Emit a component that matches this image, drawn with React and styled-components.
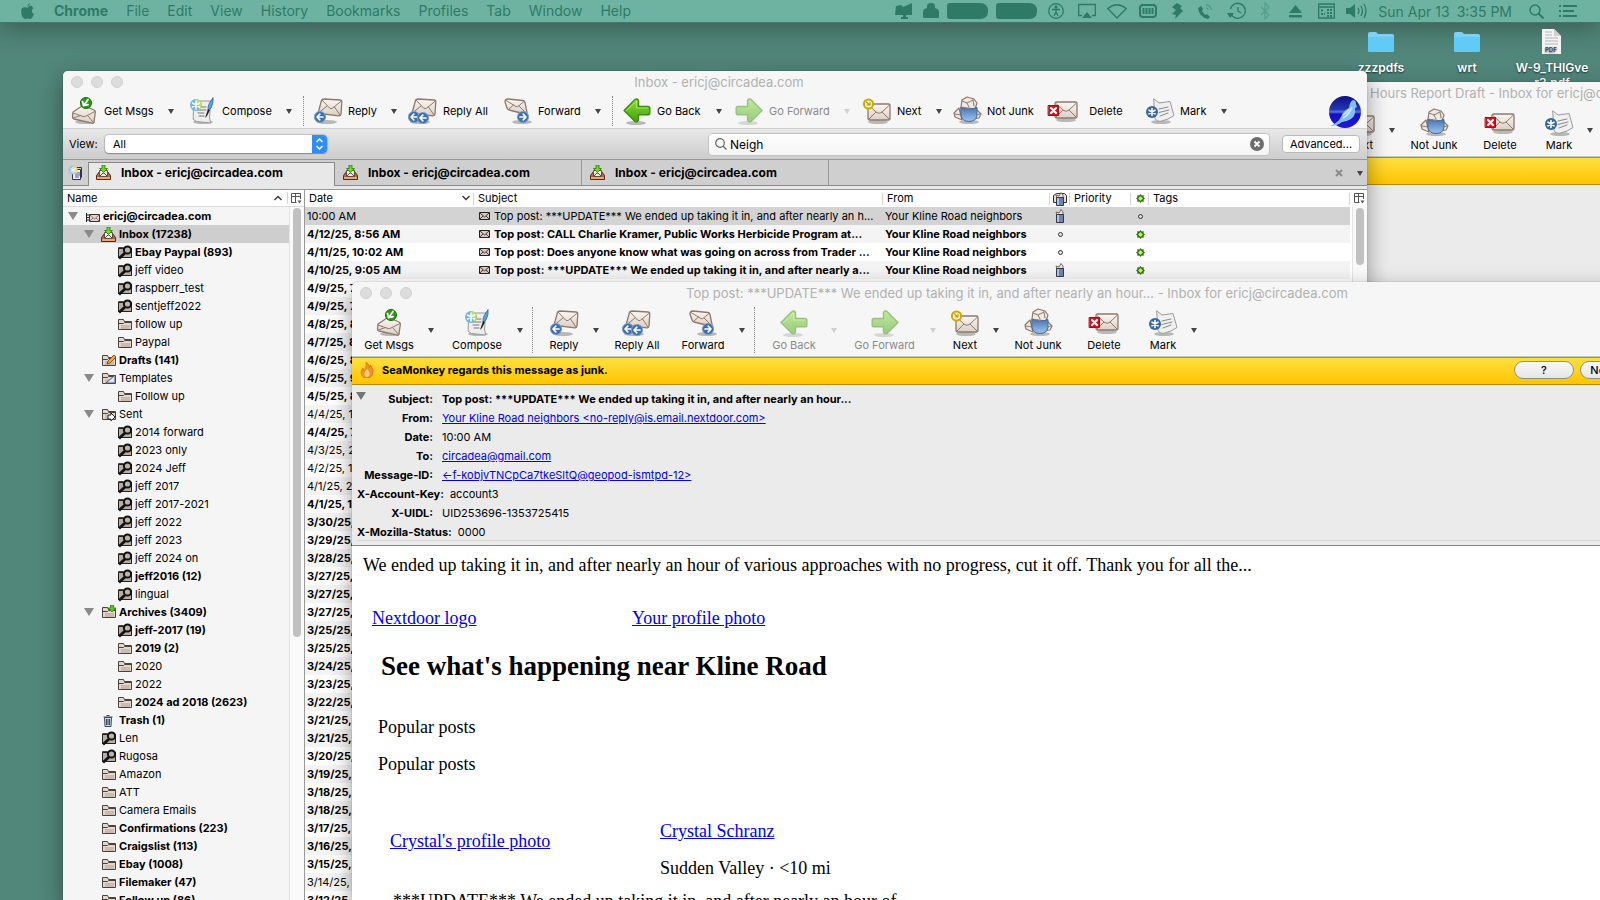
import React from "react";
import styled, { createGlobalStyle, css } from "styled-components";

const GlobalStyle = createGlobalStyle`
  * {
    box-sizing: border-box;
  }
  html,
  body {
    margin: 0;
  }
  body {
    font-family: Inter, "Liberation Sans", sans-serif;
    font-size: 11px;
    color: #000;
  }
  button,
  input,
  select {
    font: inherit;
    color: inherit;
  }
  svg {
    display: block;
    flex: none;
  }
`;

/* ---------- desktop ---------- */

const Desktop = styled.div`
  position: relative;
  height: 100vh;
  overflow: hidden;
  background: #51867a;
`;
const MenuBar = styled.nav`
  display: flex;
  align-items: center;
  justify-content: space-between;
  height: 23px;
  padding: 0 22px 0 21px;
  background: #6eb3a1;
  border-bottom: 1px solid #45756a;
  box-shadow: 0 4px 24px rgba(30, 40, 35, 0.5);
  color: #2f7a66;
  font-size: 14px;
`;
const MenuGroup = styled.div`
  display: flex;
  align-items: center;
  gap: ${(p) => p.$gap}px;
`;
const MenuItem = styled.button`
  border: 0;
  padding: 0;
  background: none;
  white-space: nowrap;
  line-height: 20px;
  font-weight: ${(p) => (p.$bold ? 700 : 400)};
`;
const Clock = styled.span`
  display: flex;
  gap: 7px;
  white-space: nowrap;
`;
const DesktopItem = styled.div`
  position: absolute;
  top: 28px;
  right: ${(p) => p.$right}px;
  width: 80px;
  display: flex;
  flex-direction: column;
  align-items: center;
  gap: 4px;
  color: #fff;
  font-size: 12px;
  font-weight: 600;
  line-height: 15px;
  text-align: center;
  text-shadow: 0 1px 2px rgba(0, 0, 0, 0.7);
`;

/* ---------- windows ---------- */

const Window = styled.section`
  position: absolute;
  top: ${(p) => p.$top}px;
  left: ${(p) => p.$left}px;
  right: ${(p) => p.$right}px;
  bottom: 0;
  display: flex;
  flex-direction: column;
  overflow: hidden;
  background: ${(p) => p.$bg || "#f6f6f6"};
  border-radius: 5px 5px 0 0;
  box-shadow: 0 0 1px rgba(0, 0, 0, 0.5), 0 8px 22px rgba(0, 0, 0, 0.4);
`;
const TitleBar = styled.header`
  display: grid;
  grid-template-columns: 60px 1fr 60px;
  align-items: center;
  flex: none;
  height: 22px;
  padding-left: 8px;
  background: #f6f6f6;
`;
const Lights = styled.div`
  display: flex;
  gap: 8px;
`;
const Light = styled.span`
  width: 12px;
  height: 12px;
  border-radius: 50%;
  background: #dcdcdc;
  border: 1px solid #d0d0d0;
`;
const Title = styled.div`
  text-align: ${(p) => (p.$indent ? "left" : "center")};
  padding-left: ${(p) => p.$indent || 0}px;
  font-size: 13px;
  line-height: 16px;
  color: #b1b1b1;
  white-space: nowrap;
`;

const Toolbar = styled.div`
  display: flex;
  flex: none;
  background: #f6f6f6;
  ${(p) =>
    p.$stacked
      ? css`
          height: 53px;
          padding: 3px 0 3px 4px;
          border-bottom: 1px solid #c9c9c9;
        `
      : css`
          height: 36px;
          padding: 3px 6px 2px 5px;
          border-bottom: 1px solid #cfcfcf;
        `}
`;
const ToolCell = styled.div`
  display: flex;
  align-items: center;
  flex: none;
  width: ${(p) => p.$w}px;
`;
const ToolButton = styled.button`
  display: flex;
  flex-direction: ${(p) => (p.$stacked ? "column" : "row")};
  align-items: center;
  gap: ${(p) => (p.$stacked ? 0 : 4)}px;
  flex: none;
  width: ${(p) => p.$w}px;
  padding: 0;
  border: 0;
  background: none;
  white-space: nowrap;
  line-height: 14px;
  color: ${(p) => (p.disabled ? "#8b8b8b" : "#000")};
  svg {
    opacity: ${(p) => (p.disabled ? 0.5 : 1)};
  }
`;
const ToolLabel = styled.span`
  min-width: ${(p) => p.$min || 0}px;
  text-align: center;
`;
const Caret = styled.span`
  border: 3px solid transparent;
  border-top: 5px solid ${(p) => (p.$dim ? "#cfcfcf" : "#444")};
  border-bottom: 0;
  margin-left: ${(p) => (p.$stacked ? 6 : 0)}px;
`;
const Separator = styled.span`
  align-self: stretch;
  margin: 0 8px 0 auto;
  border-left: 1px dotted #8a8a8a;
`;
const Spacer = styled.span`
  flex: 1;
`;

/* ---------- search row and tabs ---------- */

const SearchBar = styled.div`
  display: flex;
  align-items: center;
  flex: none;
  height: 31px;
  padding: 0 7px 0 6px;
  background: linear-gradient(#e8e8e8, #cdcdcd);
  border-bottom: 1px solid #999;
`;
const ViewLabel = styled.label`
  width: 36px;
`;
const SelectWrap = styled.div`
  position: relative;
  flex: 0 0 222px;
  height: 18px;
  svg {
    position: absolute;
    top: 0;
    right: 0;
    pointer-events: none;
  }
`;
const ViewSelect = styled.select`
  appearance: none;
  width: 100%;
  height: 18px;
  padding: 0 20px 0 8px;
  border: 0;
  border-radius: 4px;
  background: #fff;
  box-shadow: 0 0 1px 1px rgba(0, 0, 0, 0.15), 0 1px 1px rgba(0, 0, 0, 0.25);
`;
const SearchBox = styled.label`
  display: flex;
  align-items: center;
  gap: 3px;
  flex: 0 1 562px;
  height: 23px;
  margin: 0 12px 0 auto;
  padding: 0 5px 0 6px;
  border: 1px solid #c4c4c4;
  border-radius: 4px;
  background: linear-gradient(#fff, #f4f4f4);
  font-size: 12px;
`;
const SearchInput = styled.input`
  flex: 1;
  min-width: 0;
  padding: 0;
  border: 0;
  outline: 0;
  background: none;
`;
const AdvancedButton = styled.button`
  width: 78px;
  height: 18px;
  padding: 0;
  border: 1px solid #b9b9b9;
  border-radius: 4px;
  background: #fff;
  white-space: nowrap;
`;
const TabStrip = styled.div`
  display: flex;
  align-items: center;
  flex: none;
  height: 26px;
  background: linear-gradient(#8b8b8b, #8b8b8b) bottom / 100% 1px no-repeat #cfcfcf;
`;
const NewTab = styled.button`
  display: grid;
  place-items: center;
  width: 25px;
  padding: 0;
  border: 0;
  background: none;
`;
const Tab = styled.button`
  display: flex;
  align-items: center;
  align-self: ${(p) => (p.$active ? "flex-end" : "flex-start")};
  gap: 10px;
  flex: 0 1 247px;
  height: ${(p) => (p.$active ? 24 : 25)}px;
  padding: 0 8px 0 8px;
  border: 0;
  border-right: 1px solid #999;
  font-size: 12px;
  font-weight: 700;
  white-space: nowrap;
  background: none;
  ${(p) =>
    p.$active &&
    css`
      padding: 0 8px 4px 7px;
      background: #e8e8e8;
      border: 1px solid #888;
      border-bottom: 0;
    `}
`;
const TabEnd = styled.div`
  display: flex;
  align-items: center;
  gap: 14px;
  margin-left: auto;
  padding-right: 4px;
`;
const TabGap = styled.div`
  flex: none;
  height: 4px;
  background: #e8e8e8;
  border-bottom: 1px solid #999;
`;

/* ---------- folder tree ---------- */

const Panes = styled.div`
  display: flex;
  flex: 1;
  min-height: 0;
`;
const TreePane = styled.aside`
  flex: 0 0 242px;
  border-right: 1px solid #999;
  background: #f5f5f5;
`;
const TreeHead = styled.div`
  display: flex;
  align-items: center;
  height: 17px;
  padding: 0 2px 0 4px;
  background: #fff;
  border-bottom: 1px solid #dcdcdc;
`;
const HeadCut = styled.span`
  width: 1px;
  height: 12px;
  margin: 0 3px 0 5px;
  background: #d6d6d6;
`;
const PaneBody = styled.div`
  display: flex;
`;
const Tree = styled.ul`
  flex: 1;
  min-width: 0;
  margin: 0;
  padding: 0;
  list-style: none;
`;
const TreeRow = styled.li`
  display: flex;
  align-items: center;
  height: 18px;
  padding-left: ${(p) => 5 + p.$level * 16}px;
  background: ${(p) => (p.$selected ? "#cecece" : "none")};
  font-weight: ${(p) => (p.$bold ? 700 : 400)};
  white-space: nowrap;
`;
const Twisty = styled.span`
  width: 10px;
  margin-right: 7px;
  &::before {
    content: "";
    display: ${(p) => (p.$open ? "block" : "none")};
    width: 0;
    border: 5px solid transparent;
    border-top: 8px solid #8a8a8a;
    border-bottom: 0;
  }
`;
const TreeText = styled.span`
  margin-left: 3px;
`;
const ScrollTrack = styled.div`
  flex: ${(p) => (p.$fill ? 1 : "none")};
  width: 15px;
  padding: 1px 3px;
  background: #fafafa;
  border-left: 1px solid #e4e4e4;
`;
const ScrollThumb = styled.div`
  width: 8px;
  height: ${(p) => p.$h}px;
  border-radius: 4px;
  background: #c1c1c1;
`;

/* ---------- message list ---------- */

const ListPane = styled.div`
  display: flex;
  flex: 1;
  min-width: 0;
  align-items: flex-start;
  background: #fff;
`;
const MessageTable = styled.table`
  flex: 1;
  width: 100%;
  table-layout: fixed;
  border-collapse: collapse;
  white-space: nowrap;
`;
const HeadCell = styled.th`
  height: 17px;
  padding: ${(p) => (p.$icon ? 0 : "0 4px 1px")};
  text-align: left;
  font-weight: 400;
  background: linear-gradient(#d6d6d6, #d6d6d6) right center / 1px 12px no-repeat #fff;
  svg {
    margin: ${(p) => (p.$icon ? "auto" : 0)};
  }
`;
const HeadFlex = styled.span`
  display: flex;
  align-items: center;
  justify-content: space-between;
`;
const MessageRow = styled.tr`
  height: 18px;
  font-weight: ${(p) => (p.$bold ? 700 : 400)};
  &:nth-child(even) {
    background: #f4f4f4;
  }
  &:first-child {
    background: #d3d3d3;
  }
`;
const Cell = styled.td`
  height: 18px;
  padding: ${(p) => (p.$icon ? 0 : "0 0 0 2px")};
  overflow: hidden;
  svg {
    margin: ${(p) => (p.$icon ? "auto" : 0)};
  }
`;
const SubjectFlex = styled.span`
  display: flex;
  align-items: center;
  gap: 4px;
  padding-left: 3px;
`;
const ListSide = styled.div`
  flex: 0 0 17px;
  align-self: stretch;
  display: flex;
  flex-direction: column;
  align-items: flex-end;
`;
const SideHead = styled.div`
  display: flex;
  align-items: center;
  height: 17px;
  padding-right: 2px;
`;

/* ---------- message window ---------- */

const JunkBar = styled.div`
  display: flex;
  align-items: center;
  flex: none;
  height: 28px;
  padding: 0 8px 2px;
  background: linear-gradient(#ffe040, #fec400);
  border: solid #b98a11;
  border-width: 1px 0;
  font-weight: 700;
`;
const JunkText = styled.span`
  margin: 0 auto 0 8px;
`;
const PillButton = styled.button`
  width: ${(p) => p.$w}px;
  height: 18px;
  margin-right: 6px;
  padding: 0;
  border: 1px solid #8e8e8e;
  border-radius: 9px;
  background: linear-gradient(#f8f8f8, #e6e6e6);
  font-weight: 500;
`;
const CloseButton = styled.button`
  width: 12px;
  padding: 0;
  border: 0;
  background: none;
`;
const HeaderPanel = styled.div`
  display: flex;
  align-items: flex-start;
  flex: none;
  height: 161px;
  padding: 5px 0 0 4px;
  background: linear-gradient(#d8d8d8, #d8d8d8) 5px 155px / 100% 1px no-repeat #ebebeb;
  border-bottom: 1px solid #868686;
`;
const PanelTwisty = styled.button`
  width: 0;
  height: 8px;
  margin-top: 2px;
  padding: 0;
  border: 5px solid transparent;
  border-top: 8px solid #757575;
  border-bottom: 0;
  background: none;
`;
const HeaderList = styled.dl`
  flex: 1;
  margin: 0 0 0 -9px;
`;
const HeaderLine = styled.div`
  display: flex;
  gap: ${(p) => (p.$long ? 6 : 9)}px;
  height: 19px;
  line-height: 19px;
  white-space: nowrap;
`;
const HeaderName = styled.dt`
  min-width: 76px;
  text-align: right;
  font-weight: 700;
`;
const HeaderValue = styled.dd`
  margin: 0;
  font-weight: ${(p) => (p.$bold ? 700 : 400)};
`;
const Link = styled.a`
  color: #0000ee;
  text-decoration: underline;
`;
const MailBody = styled.article`
  flex: 1;
  padding: 7px 11px;
  background: #fff;
  font-family: "Liberation Serif", serif;
  font-size: 18px;
  line-height: 24px;
`;
const Para = styled.p`
  margin: 0 0 ${(p) => p.$after}px;
  padding-left: ${(p) => p.$indent || 0}px;
`;
const Columns = styled.div`
  display: grid;
  grid-template-columns: ${(p) => p.$first}px 1fr;
  padding-left: ${(p) => p.$indent}px;
  margin-bottom: ${(p) => p.$after}px;
`;
const PhotoCell = styled.div`
  padding-top: 10px;
`;
const Heading = styled.h1`
  margin: 0 0 31px;
  padding-left: 18px;
  font-size: 27px;
  line-height: 36px;
`;

/* ---------- toolbar icons ---------- */

const PAPER = "#f1e9e3";
const EDGE = "#8d7a6c";
const BLUE = "#3d6fae";

function Big({ children }) {
  return (
    <svg width="32" height="30" viewBox="0 0 32 30" fill="none" strokeLinejoin="round" strokeLinecap="round">
      <defs>
        <linearGradient id="paper" x1="0" y1="0" x2="0" y2="1">
          <stop offset="0" stopColor="#fbf6f2" />
          <stop offset="1" stopColor="#dccfc5" />
        </linearGradient>
        <linearGradient id="leaf" x1="0" y1="0" x2="0" y2="1">
          <stop offset="0" stopColor="#8be03c" />
          <stop offset="1" stopColor="#3f9f0a" />
        </linearGradient>
        <linearGradient id="cup" x1="0" y1="0" x2="0" y2="1">
          <stop offset="0" stopColor="#4a76b2" />
          <stop offset="1" stopColor="#9dc6ee" />
        </linearGradient>
      </defs>
      {children}
    </svg>
  );
}

function Shade({ cx = 17, cy = 26 }) {
  return <ellipse cx={cx} cy={cy} rx="10" ry="2" fill="#000" opacity=".25" />;
}

function Arrow({ x, y, flip }) {
  return (
    <g transform={`translate(${x} ${y}) scale(${flip ? -1 : 1} 1)`}>
      <circle r="5.6" fill={BLUE} stroke="#7f9fc8" />
      <path d="M3 0H-2.6M-.2-2.8L-3 0l2.800 2.800" stroke="#fff" strokeWidth="1.700" />
    </g>
  );
}

function TiltedMail({ x = 0 }) {
  return (
    <g transform={`translate(${x} 0)`}>
      <path d="M8.500 4.500Q9 3 11 3l16 1q2 .2 1.800 2L28 18q-.3 2-2 1.800L7 17.500q-2-.5-1.500-2z" fill="url(#paper)" stroke={EDGE} strokeWidth="1.300" />
      <path d="M9 4l7.500 8q1.500 1.200 3 .2L28.500 5M6 16.500l8-6.500M27 19l-5.500-8" stroke={EDGE} />
    </g>
  );
}

function GetIcon() {
  return (
    <Big>
      <Shade />
      <path d="M5 16l9-6q1.500-.8 3 .2L26 14q1.500.8 1.300 2.500L26 26q-.3 1.500-2 1.200L6 23q-1.500-.4-1.500-2z" fill="url(#paper)" stroke={EDGE} strokeWidth="1.300" />
      <path d="M5 17l10 3.500q1.500.4 3-.5l9-4.500M5.500 22l7-2.500M25 26l-5-6" stroke={EDGE} />
      <circle cx="18" cy="7" r="5.600" fill="#2c9613" stroke="#1d7a0a" />
      <path d="M20 3.500l-3.500 5M14.500 5.500l1 4 4.500-.8" stroke="#fff" strokeWidth="1.800" />
    </Big>
  );
}
function ComposeIcon() {
  return (
    <Big>
      <Shade />
      <path d="M8 5h17l-1.500 16 1 6-14-1.500-3-2z" fill="#eee" stroke="#999" />
      <path d="M12 11h8M12 14h8M12 17h6M13 20h5" stroke="#777" />
      <circle cx="10" cy="9" r="6" fill="#6fb6e6" />
      <path d="M10 3a6 6 0 0 1 3 11z" fill="#c9dc5a" />
      <path d="M10 5v8M6.500 7l7 4M13.500 7l-7 4" stroke="#fff" strokeWidth="1.500" />
      <path d="M27 2q1 4-2 10l-3 2q-.5-6 5-12z" fill="#5fa6e4" stroke="#2b5f9c" strokeWidth=".8" />
      <path d="M22 13l2 1-3 6-2 2z" fill="#222" />
    </Big>
  );
}
function ReplyIcon() {
  return (
    <Big>
      <Shade cx={15} />
      <TiltedMail x={1} />
      <Arrow x={8} y={21} />
    </Big>
  );
}
function ReplyAllIcon() {
  return (
    <Big>
      <Shade cx={13} />
      <TiltedMail />
      <Arrow x={7} y={21} />
      <Arrow x={16} y={22} />
    </Big>
  );
}
function ForwardIcon() {
  return (
    <Big>
      <Shade cx={20} />
      <path d="M6 3l15 1.500q1.500.3 2 2l2 10q0 2-2 1.500L7 14q-1.500-.5-2-2L3 6q0-3 3-3z" fill="url(#paper)" stroke={EDGE} strokeWidth="1.300" />
      <path d="M4 4.500l10 6q1.500.6 2.500-.5L22 5.500M6.500 13.500l5-4.500M24 17l-7-7" stroke={EDGE} />
      <Arrow x={21} y={21} flip />
    </Big>
  );
}
const ARROW = "M3 14.500L14 3.500Q16 2 17.500 4.500V10.500H27q1.800 0 1.800 1.800V17q0 1.800-1.800 1.800H17.500V24Q16 27 14 25.500z";
function BackIcon() {
  return (
    <Big>
      <Shade cx={15} cy={27} />
      <path d={ARROW} fill="url(#leaf)" stroke="#3c8d10" strokeWidth="1.400" />
      <path d="M5.500 14.500l10-9.500v7h11" stroke="#b8f070" opacity=".7" />
    </Big>
  );
}
function NextPageIcon() {
  return (
    <Big>
      <Shade cx={15} cy={27} />
      <g transform="translate(32 0) scale(-1 1)">
        <path d={ARROW} fill="url(#leaf)" stroke="#3c8d10" strokeWidth="1.400" />
      </g>
    </Big>
  );
}
function FlatMail({ x, y }) {
  return (
    <g transform={`translate(${x} ${y})`}>
      <rect x="0" y="0" width="22" height="16" rx="1.500" fill="url(#paper)" stroke={EDGE} strokeWidth="1.300" />
      <path d="M1 1.500l7.500 7q2.500 1.500 5 0l7.500-7M1 15l7-7M21 15l-7-7" stroke={EDGE} />
    </g>
  );
}
function NextIcon() {
  return (
    <Big>
      <Shade />
      <FlatMail x={7} y={8} />
      <circle cx="7.500" cy="8" r="4.600" fill="#fffbe0" stroke="#d2a800" strokeWidth="2" />
      <path d="M5.500 6l3 3M9 6v3H6" stroke="#c09a00" strokeWidth="1.200" />
    </Big>
  );
}
function JunkIcon() {
  return (
    <Big>
      <Shade cx={18} />
      <path d="M8 12l-5 5 1 4 7 3zM24 12l6 6-2 4-6 1zM10 11l1-7 5-3 7 2 3 4-2 6z" fill={PAPER} stroke={EDGE} strokeWidth="1.200" />
      <path d="M11 5l5 2 6-3M16 7l2 4M22 4l1 6M4 18l6 1M25 19l4-1" stroke={EDGE} />
      <path d="M10 11.500q8 3 16 0v8q-1 6-8 6t-8-6z" fill="url(#cup)" stroke="#48679a" />
    </Big>
  );
}
function DeleteIcon() {
  return (
    <Big>
      <Shade cx={19} cy={24} />
      <FlatMail x={8} y={6} />
      <rect x="1.500" y="9.500" width="10" height="10" fill="#d0141c" stroke="#a30f15" />
      <path d="M4 12l5 5M9 12l-5 5" stroke="#fff" strokeWidth="2.200" />
    </Big>
  );
}
function MarkIcon() {
  return (
    <Big>
      <Shade cx={17} />
      <path d="M10 3l5 4 11-1.500 4 14q-5 4-14 6-4 0-5-3z" fill="#f0f0f0" stroke="#999" />
      <path d="M15 13l9-2M15 16.500l10-2.500M16 20l8-3" stroke="#888" />
      <circle cx="8" cy="16" r="6" fill="#34669f" />
      <path d="M8 12.500v7M5 14.200l6 3.600M11 14.200l-6 3.600" stroke="#fff" strokeWidth="1.600" />
    </Big>
  );
}
function SeaMonkeyLogo() {
  return (
    <svg width="32" height="32" viewBox="0 0 32 32">
      <defs>
        <linearGradient id="sea" x1="0" y1="0" x2="0" y2="1">
          <stop offset="0" stopColor="#0e0e86" />
          <stop offset=".42" stopColor="#2436b4" />
          <stop offset=".5" stopColor="#5878e8" />
          <stop offset=".56" stopColor="#1410c0" />
          <stop offset="1" stopColor="#2018d8" />
        </linearGradient>
      </defs>
      <circle cx="16" cy="16" r="16" fill="url(#sea)" />
      <path d="M1 30q8-3 11-9 2-6 8-9 1-7 4-8 3 0 3 4l1 3-2 1q1 8-4 11-5 3-9 3-5 4-12 4z" fill="#84bdf6" />
      <path d="M14 22q6-3 9-11M14 19q4-2 6-6" stroke="#d6ecff" strokeWidth="1.500" fill="none" />
    </svg>
  );
}

/* ---------- small icons ---------- */

function FolderShape() {
  return (
    <>
      <path d="M1.500 12.500v-10h5l1 2h7v8z" fill="#e3d8d0" stroke="#4a423d" />
      <path d="M1.500 6.500h5l1-1h7" stroke="#4a423d" fill="none" />
      <path d="M4 8h9v4H4z" fill="#cbbab0" />
    </>
  );
}
function SmallIcon({ kind }) {
  return (
    <svg width="15" height="15" viewBox="0 0 15 15">
      {["folder", "search", "drafts", "templates", "sent", "archive"].includes(kind) && <FolderShape />}
      {kind === "search" && (
        <>
          <path d="M1.500 3.500h13v9h-13z" fill="#b8aca4" stroke="#222" />
          <path d="M2 13.500L8 8" stroke="#111" strokeWidth="2.800" />
          <circle cx="10.500" cy="5" r="3.600" fill="#b9b3ae" stroke="#111" strokeWidth="2" />
        </>
      )}
      {kind === "drafts" && <path d="M6 11l1-3 6-6 2 2-6 6z" fill="#f4a63a" stroke="#7a3c10" strokeWidth=".8" />}
      {kind === "templates" && <path d="M5 12L14 4v8z" fill="#dfe6f4" stroke="#4a5580" />}
      {kind === "sent" && <path d="M7 8h3V6l4 4-4 4v-2H7z" fill="#fff" stroke="#222" />}
      {kind === "archive" && <path d="M9.500 0h3v3H15l-4 4-4-4h2.500z" fill="#5cc81e" stroke="#2c7a0b" strokeWidth=".8" />}
      {kind === "trash" && (
        <>
          <path d="M3.500 4.500h7l-.5 9H4z" fill="#c9d6e2" stroke="#3c4a5a" />
          <path d="M2.500 4h9M5.500 2.500h3M5.500 6v6M7 6v6M8.500 6v6" stroke="#3c4a5a" />
        </>
      )}
      {kind === "account" && (
        <>
          <path d="M1.500 4v9M1 8.500h3M2 6h2M2 11h2" stroke="#222" />
          <path d="M4.500 5.500h10v7h-10z" fill="#e6d6d0" stroke="#333" />
          <path d="M5 6l4.500 4L14 6M5 12l3-3M14 12l-3-3" stroke="#7a5a52" fill="none" strokeWidth=".8" />
        </>
      )}
      {kind === "inbox" && (
        <>
          <path d="M.5 14.500v-4l3-4h8l3 4v4z" fill="#b9683a" stroke="#5a2a10" />
          <path d="M3.500 5.500h8v6h-8z" fill="#efe9e2" stroke="#5a504a" />
          <path d="M4 11l3-3h1l3 3" stroke="#5a504a" fill="none" />
          <path d="M1 12h13v2H1z" fill="#e9a878" />
          <path d="M6 0h3v3.500h2.500l-4 4-4-4H6z" fill="#6fd820" stroke="#2b7a08" strokeWidth=".8" />
        </>
      )}
    </svg>
  );
}
function TabPageIcon() {
  return (
    <svg width="16" height="16" viewBox="0 0 16 16">
      <path d="M4.500 4.500h8v10h-8z" fill="#eee" stroke="#334" />
      <path d="M7.500 2.500h6v10" fill="none" stroke="#334" />
      <path d="M7 8h5M7 10h5M7 12h4" stroke="#445a9a" />
      <circle cx="5" cy="5" r="4.500" fill="#9cc3e6" />
      <path d="M5 .5a4.500 4.500 0 0 1 2 8.500z" fill="#e8dc7a" />
      <path d="M5 2v6M2.500 3.500l5 3M7.500 3.500l-5 3" stroke="#fff" />
    </svg>
  );
}
function ColumnPicker() {
  return (
    <svg width="11" height="11" viewBox="0 0 11 11" fill="none" stroke="#555">
      <path d="M9.500 6V.5h-9v9h5M.5 3.500h9M4.500.5v9" />
      <path d="M6.500 7.500h4l-2 3z" fill="#555" stroke="none" />
    </svg>
  );
}
function Chevron({ up }) {
  return (
    <svg width="8" height="6" viewBox="0 0 8 6" fill="none" stroke="#333" strokeWidth="1.300">
      <path d={up ? "M.5 5L4 1.500 7.500 5" : "M.5 1L4 4.500 7.500 1"} />
    </svg>
  );
}
function MiniMail() {
  return (
    <svg width="11" height="8" viewBox="0 0 11 8">
      <path d="M.5.5h10v7H.5z" fill="#d8cac4" stroke="#222" />
      <path d="M1 1l4.500 4L10 1M1 7l3-3M10 7L7 4" fill="none" stroke="#4a3a34" />
    </svg>
  );
}
function Dot() {
  return (
    <svg width="5" height="5" viewBox="0 0 5 5">
      <circle cx="2.500" cy="2.500" r="2" fill="#dde4ee" stroke="#222" strokeWidth=".9" />
    </svg>
  );
}
function Star() {
  return (
    <svg width="9" height="9" viewBox="0 0 9 9">
      <path d="M4.500 0l1.200 1.500L7.800 1.200 7.500 3.300 9 4.500 7.500 5.700l.3 2.100-2.100-.3L4.500 9 3.300 7.500l-2.100.3.3-2.100L0 4.500l1.500-1.200L1.200 1.200l2.100.3z" fill="#2d6b0c" />
      <path d="M4.500 2L7 4.500 4.500 7 2 4.500z" fill="#b6f56a" />
    </svg>
  );
}
function JunkCan({ wide }) {
  return (
    <svg width={wide ? 14 : 10} height="14" viewBox={wide ? "-2 0 14 14" : "0 0 10 14"}>
      {wide && <path d="M-1.500 3.500l3-2h8l2 2v7h-13z" fill="#e6dcd4" stroke="#333" />}
      <path d="M2 6l-1-3 3 1 2-3.500L8 3v3z" fill="#f0e2d8" stroke="#5a4a44" strokeWidth=".8" />
      <path d="M1.500 5.500h7v8h-7z" fill="#6f84ac" stroke="#222b40" strokeWidth=".9" />
      <path d="M2 6h2v7H2z" fill="#b6c4dc" />
    </svg>
  );
}
function Flame() {
  return (
    <svg width="14" height="16" viewBox="0 0 14 16">
      <path d="M6 0q4 3 3.500 6 1-1 .8-3Q14 7 13 11q-1 5-6 5t-6-5q0-3 2-5 0 2 1 3 3-4 2-9z" fill="#f2922a" stroke="#dd6a12" strokeWidth=".7" />
      <path d="M7 7q3 3 2.500 5.500Q9 15 7 15t-2.500-2.500Q4.500 10 7 7z" fill="#ffd978" />
    </svg>
  );
}
function FolderIcon() {
  return (
    <svg width="28" height="28" viewBox="0 0 28 28">
      <path d="M1 6q0-2 2-2h6l2 2h14q2 0 2 2v15H1z" fill="#7fd0f2" />
      <path d="M1 9h26v14q0 1-1 1H2q-1 0-1-1z" fill="#5fcbf6" />
    </svg>
  );
}
function PdfIcon() {
  return (
    <svg width="22" height="28" viewBox="0 0 22 28">
      <path d="M1 1h12l7 7v18H1z" fill="#f4f4f4" />
      <path d="M13 1l7 7h-7z" fill="#cfcfcf" />
      <path d="M4 4h7M4 7h7M4 10h13M4 13h13M4 16h13" stroke="#b5b5b5" />
      <text x="4" y="24" fontSize="6" fontFamily="Inter, sans-serif" fill="#444">PDF</text>
    </svg>
  );
}

const trayIcons = [
  { w: 18, next: 10, d: <path d="M1 4l5-1 2 2 7-3 2-1v12h-6v2h2v2H6v-2h2v-2H0z" fill="currentColor" stroke="none" /> },
  { w: 16, next: 8, d: <path d="M4 4q0-3 4-3t4 3v2q4 1 4 4v5q0 1-1 1H1q-1 0-1-1v-5q0-3 4-4z" fill="currentColor" stroke="none" /> },
  { w: 41, next: 8, d: <path d="M3 1h30q8 0 8 8t-8 8H3q-3 0-3-3V4q0-3 3-3z" fill="currentColor" stroke="none" /> },
  { w: 41, next: 11, d: <path d="M3 1h30q8 0 8 8t-8 8H3q-3 0-3-3V4q0-3 3-3z" fill="currentColor" stroke="none" /> },
  { w: 16, next: 14, d: <><circle cx="8" cy="9" r="7.300" /><circle cx="8" cy="5" r="1" fill="currentColor" /><path d="M4 7.500h8M8 7v3M8 10l-2 4M8 10l2 4" /></> },
  { w: 18, next: 11, d: <><path d="M4 13.500H.700v-11h16.600v11H14" /><path d="M9 10l5 6H4z" fill="currentColor" stroke="none" /></> },
  { w: 20, next: 12, d: <path d="M10 16L.700 6.500Q10-1 19.300 6.500z" /> },
  { w: 18, next: 14, d: <><rect x="1" y="3" width="16" height="12" rx="3" strokeWidth="2" /><path d="M4.500 6v6M7.500 6v6M10.500 6v6M13.500 6v6" strokeWidth="2" /></> },
  { w: 12, next: 15, d: <path d="M6 1l5 3-2 2 3 3-8 8 1-4-4-1 4-4-4-3z" fill="currentColor" stroke="none" /> },
  { w: 18, next: 11, d: <><path d="M0 6q1 9 10 11l2-2-3-3-2 1-3-4 1-2-2-3z" fill="currentColor" stroke="none" /><path d="M10 8q0-2-2-2M13 8q0-5-5-5" opacity=".4" /></> },
  { w: 20, next: 13, d: <><path d="M4 12a7.500 7.500 0 1 0-.5-5M11 5v4l3 2" /><path d="M0 11h7l-4 5z" fill="currentColor" stroke="none" /></> },
  { w: 11, next: 18, d: <path d="M1 5l8 8-4 4V1l4 4-8 8" opacity=".35" /> },
  { w: 13, next: 16, d: <path d="M6.500 3l6.500 8H0zM0 13h13v2.500H0z" fill="currentColor" stroke="none" /> },
  { w: 17, next: 11, d: <><path d="M.7 2h15.600v14H.700zM.700 5h15.600" /><path d="M3 8.500h2M3 12h4M9 8h5M9 11h5M9 14h5" strokeWidth="2" strokeDasharray="2 1" /></> },
  { w: 21, next: 11, d: <><path d="M0 6h4l5-4v14l-5-4H0z" fill="currentColor" stroke="none" /><path d="M12 6q2 3 0 6M15 4q3 5 0 10M18 2q4 7 0 14" /></> },
];

function AppleIcon() {
  return (
    <svg width="15" height="16" viewBox="0 0 15 16" fill="currentColor">
      <path d="M9 0q.2 2-2.500 3.800Q6 1.500 9 0zM6.700 4.700Q10-.0 12.300 5.200q-3.300 3 .7 6Q11 16 9.200 16q-2.500-1-4.800 0Q1.500 15.500.5 11-.8 5 3 4.200q1.800-.2 3.700.5z" />
    </svg>
  );
}

/* ---------- data ---------- */

const menus = ["File", "Edit", "View", "History", "Bookmarks", "Profiles", "Tab", "Window", "Help"];

// w / b: cell and button width beside the label, sw / sb: the same with the label below
const tools = [
  { label: "Get Msgs", icon: GetIcon, w: 118, b: 100, sw: 87, sb: 66, menu: true },
  { label: "Compose", icon: ComposeIcon, w: 126, b: 100, sw: 98, sb: 68, menu: true, sep: true },
  { label: "Reply", icon: ReplyIcon, w: 95, b: 79, sw: 64, sb: 46, menu: true },
  { label: "Reply All", icon: ReplyAllIcon, w: 95, b: 90, sw: 68, sb: 64 },
  { label: "Forward", icon: ForwardIcon, w: 119, b: 93, sw: 90, sb: 60, menu: true, sep: true },
  { label: "Go Back", icon: BackIcon, w: 112, b: 95, sw: 82, sb: 62, menu: true, dimStacked: true },
  { label: "Go Forward", icon: NextPageIcon, w: 128, b: 111, sw: 98, sb: 79, menu: true, dim: true },
  { label: "Next", icon: NextIcon, w: 90, b: 75, sw: 64, sb: 44, menu: true },
  { label: "Not Junk", icon: JunkIcon, w: 96, b: 90, sw: 72, sb: 62 },
  { label: "Delete", icon: DeleteIcon, w: 97, b: 90, sw: 62, sb: 50, min: 46 },
  { label: "Mark", icon: MarkIcon, w: 90, b: 77, sw: 60, sb: 44, menu: true },
];

const folders = [
  [0, "account", "ericj@circadea.com", true, true],
  [1, "inbox", "Inbox (17238)", true, true],
  [2, "search", "Ebay Paypal (893)", true],
  [2, "search", "jeff video"],
  [2, "search", "raspberr_test"],
  [2, "search", "sentjeff2022"],
  [2, "folder", "follow up"],
  [2, "folder", "Paypal"],
  [1, "drafts", "Drafts (141)", true],
  [1, "templates", "Templates", false, true],
  [2, "folder", "Follow up"],
  [1, "sent", "Sent", false, true],
  [2, "search", "2014 forward"],
  [2, "search", "2023 only"],
  [2, "search", "2024 Jeff"],
  [2, "search", "jeff 2017"],
  [2, "search", "jeff 2017-2021"],
  [2, "search", "jeff 2022"],
  [2, "search", "jeff 2023"],
  [2, "search", "jeff 2024 on"],
  [2, "search", "jeff2016 (12)", true],
  [2, "search", "lingual"],
  [1, "archive", "Archives (3409)", true, true],
  [2, "search", "jeff-2017 (19)", true],
  [2, "folder", "2019 (2)", true],
  [2, "folder", "2020"],
  [2, "folder", "2022"],
  [2, "folder", "2024 ad 2018 (2623)", true],
  [1, "trash", "Trash (1)", true],
  [1, "search", "Len"],
  [1, "search", "Rugosa"],
  [1, "folder", "Amazon"],
  [1, "folder", "ATT"],
  [1, "folder", "Camera Emails"],
  [1, "folder", "Confirmations (223)", true],
  [1, "folder", "Craigslist (113)", true],
  [1, "folder", "Ebay (1008)", true],
  [1, "folder", "Filemaker (47)", true],
  [1, "folder", "Follow up (86)", true],
];

const sender = "Your Kline Road neighbors";
const messages = [
  { date: "10:00 AM", subject: "Top post: ***UPDATE*** We ended up taking it in, and after nearly an h...", junk: true, read: true },
  { date: "4/12/25, 8:56 AM", subject: "Top post: CALL Charlie Kramer, Public Works Herbicide Program at..." },
  { date: "4/11/25, 10:02 AM", subject: "Top post: Does anyone know what was going on across from Trader ..." },
  { date: "4/10/25, 9:05 AM", subject: "Top post: ***UPDATE*** We ended up taking it in, and after nearly a...", junk: true },
  ...["4/9/25, 7", "4/9/25, 7", "4/8/25, 8", "4/7/25, 8", "4/6/25, 8", "4/5/25, 9", "4/5/25, 8"].map((date) => ({ date })),
  { date: "4/4/25, 1", read: true },
  { date: "4/4/25, 7" },
  { date: "4/3/25, 2", read: true },
  { date: "4/2/25, 1", read: true },
  { date: "4/1/25, 2", read: true },
  { date: "4/1/25, 1" },
  ...[30, 29, 28, 27, 27, 27, 25, 25, 24, 23, 22, 21, 21, 20, 19, 18, 18, 17, 16, 15].map((d) => ({ date: `3/${d}/25,` })),
  { date: "3/14/25,", read: true },
  { date: "3/12/25," },
];

const headers = [
  ["Subject:", "Top post: ***UPDATE*** We ended up taking it in, and after nearly an hour..."],
  ["From:", "Your Kline Road neighbors <no-reply@is.email.nextdoor.com>", "link"],
  ["Date:", "10:00 AM"],
  ["To:", "circadea@gmail.com", "link"],
  ["Message-ID:", "<-f-kobjvTNCpCa7tkeSltQ@geopod-ismtpd-12>", "link"],
  ["X-Account-Key:", "account3", "long"],
  ["X-UIDL:", "UID253696-1353725415"],
  ["X-Mozilla-Status:", "0000", "long"],
];

/* ---------- parts ---------- */

function WindowTitle({ children, indent }) {
  return (
    <TitleBar>
      <Lights>
        <Light />
        <Light />
        <Light />
      </Lights>
      <Title $indent={indent}>{children}</Title>
    </TitleBar>
  );
}

function MailToolbar({ stacked, children }) {
  return (
    <Toolbar $stacked={stacked}>
      {tools.map(({ label, icon: Icon, ...t }) => {
        const dim = t.dim || (stacked && t.dimStacked);
        return (
          <ToolCell key={label} $w={stacked ? t.sw : t.w}>
            <ToolButton $stacked={stacked} $w={stacked ? t.sb : t.b} disabled={dim}>
              <Icon />
              <ToolLabel $min={stacked ? 0 : t.min}>{label}</ToolLabel>
            </ToolButton>
            {t.menu && <Caret $dim={dim} $stacked={stacked} />}
            {t.sep && <Separator />}
          </ToolCell>
        );
      })}
      {children}
    </Toolbar>
  );
}

function FolderTree() {
  return (
    <TreePane>
      <TreeHead>
        Name
        <Spacer />
        <Chevron up />
        <HeadCut />
        <ColumnPicker />
      </TreeHead>
      <PaneBody>
        <Tree>
          {folders.map(([level, kind, name, bold, open]) => (
            <TreeRow key={level + name} $level={level} $bold={bold} $selected={kind === "inbox"}>
              <Twisty $open={open} />
              <SmallIcon kind={kind} />
              <TreeText>{name}</TreeText>
            </TreeRow>
          ))}
        </Tree>
        <ScrollTrack>
          <ScrollThumb $h={429} />
        </ScrollTrack>
      </PaneBody>
    </TreePane>
  );
}

function MessageList() {
  return (
    <ListPane>
      <MessageTable>
        <colgroup>
          <col width="169" />
          <col width="409" />
          <col width="167" />
          <col width="20" />
          <col width="61" />
          <col width="18" />
          <col />
        </colgroup>
        <thead>
          <tr>
            <HeadCell>
              <HeadFlex>
                Date
                <Chevron />
              </HeadFlex>
            </HeadCell>
            <HeadCell>Subject</HeadCell>
            <HeadCell>From</HeadCell>
            <HeadCell $icon>
              <JunkCan wide />
            </HeadCell>
            <HeadCell>Priority</HeadCell>
            <HeadCell $icon>
              <Star />
            </HeadCell>
            <HeadCell>Tags</HeadCell>
          </tr>
        </thead>
        <tbody>
          {messages.map((m, i) => (
            <MessageRow key={i} $bold={!m.read}>
              <Cell>{m.date}</Cell>
              <Cell>
                {m.subject && (
                  <SubjectFlex>
                    <MiniMail />
                    {m.subject}
                  </SubjectFlex>
                )}
              </Cell>
              <Cell>{m.subject && sender}</Cell>
              <Cell $icon>{m.subject && (m.junk ? <JunkCan /> : <Dot />)}</Cell>
              <Cell />
              <Cell $icon>{m.subject && (m.read ? <Dot /> : <Star />)}</Cell>
              <Cell />
            </MessageRow>
          ))}
        </tbody>
      </MessageTable>
      <ListSide>
        <SideHead>
          <ColumnPicker />
        </SideHead>
        <ScrollTrack $fill>
          <ScrollThumb $h={57} />
        </ScrollTrack>
      </ListSide>
    </ListPane>
  );
}

function InboxWindow() {
  return (
    <Window $top={71} $left={63} $right={233}>
      <WindowTitle>Inbox - ericj@circadea.com</WindowTitle>
      <MailToolbar>
        <Spacer />
        <SeaMonkeyLogo />
      </MailToolbar>
      <SearchBar>
        <ViewLabel htmlFor="view">View:</ViewLabel>
        <SelectWrap>
          <ViewSelect id="view" defaultValue="All">
            <option>All</option>
          </ViewSelect>
          <svg width="15" height="18" viewBox="0 0 15 18">
            <path d="M0 0h11q4 0 4 4v10q0 4-4 4H0z" fill="#2f8dfb" />
            <path d="M4.500 7l3-3 3 3M4.500 11l3 3 3-3" stroke="#fff" strokeWidth="1.400" fill="none" />
          </svg>
        </SelectWrap>
        <SearchBox>
          <svg width="12" height="12" viewBox="0 0 12 12" fill="none" stroke="#666" strokeWidth="1.200">
            <circle cx="5" cy="5" r="4.300" />
            <path d="M8 8l3.500 3.500" />
          </svg>
          <SearchInput aria-label="Search" defaultValue="Neigh" />
          <svg width="14" height="14" viewBox="0 0 14 14">
            <circle cx="7" cy="7" r="7" fill="#6d6d6d" />
            <path d="M4.500 4.500l5 5M9.500 4.500l-5 5" stroke="#fff" strokeWidth="1.800" />
          </svg>
        </SearchBox>
        <AdvancedButton>Advanced...</AdvancedButton>
      </SearchBar>
      <TabStrip>
        <NewTab aria-label="New tab">
          <TabPageIcon />
        </NewTab>
        {[0, 1, 2].map((n) => (
          <Tab key={n} $active={n === 0}>
            <SmallIcon kind="inbox" />
            Inbox - ericj@circadea.com
          </Tab>
        ))}
        <TabEnd>
          <svg width="8" height="8" viewBox="0 0 8 8" stroke="#8a8a8a" strokeWidth="2">
            <path d="M1 1l6 6M7 1L1 7" />
          </svg>
          <Caret />
        </TabEnd>
      </TabStrip>
      <TabGap />
      <Panes>
        <FolderTree />
        <MessageList />
      </Panes>
    </Window>
  );
}

function JunkNotice() {
  return (
    <JunkBar>
      <Flame />
      <JunkText>SeaMonkey regards this message as junk.</JunkText>
      <PillButton $w={60}>?</PillButton>
      <PillButton $w={68}>Not Junk</PillButton>
      <CloseButton aria-label="Close">
        <svg width="8" height="8" viewBox="0 0 8 8" stroke="#6a5410" strokeWidth="1.500">
          <path d="M1 1l6 6M7 1L1 7" />
        </svg>
      </CloseButton>
    </JunkBar>
  );
}

function MessageWindow() {
  return (
    <Window $top={282} $left={352} $right={-74}>
      <WindowTitle>
        Top post: ***UPDATE*** We ended up taking it in, and after nearly an hour... - Inbox for ericj@circadea.com
      </WindowTitle>
      <MailToolbar stacked />
      <JunkNotice />
      <HeaderPanel>
        <PanelTwisty aria-label="Collapse headers" />
        <HeaderList>
          {headers.map(([name, value, kind]) => (
            <HeaderLine key={name} $long={kind === "long"}>
              <HeaderName>{name}</HeaderName>
              <HeaderValue $bold={name === "Subject:"}>
                {kind === "link" ? <Link href="#">{value}</Link> : value}
              </HeaderValue>
            </HeaderLine>
          ))}
        </HeaderList>
      </HeaderPanel>
      <MailBody>
        <Para $after={29}>
          We ended up taking it in, and after nearly an hour of various approaches with no progress, cut it off. Thank
          you for all the...
        </Para>
        <Columns $indent={9} $first={260} $after={18}>
          <div>
            <Link href="#">Nextdoor logo</Link>
          </div>
          <div>
            <Link href="#">Your profile photo</Link>
          </div>
        </Columns>
        <Heading>See what's happening near Kline Road</Heading>
        <Para $indent={15} $after={13}>
          Popular posts
        </Para>
        <Para $indent={15} $after={43}>
          Popular posts
        </Para>
        <Columns $indent={27} $first={270} $after={9}>
          <PhotoCell>
            <Link href="#">Crystal's profile photo</Link>
          </PhotoCell>
          <div>
            <Para $after={13}>
              <Link href="#">Crystal Schranz</Link>
            </Para>
            <Para $after={0}>Sudden Valley · &lt;10 mi</Para>
          </div>
        </Columns>
        <Para $indent={30} $after={0}>
          ***UPDATE*** We ended up taking it in, and after nearly an hour of
        </Para>
      </MailBody>
    </Window>
  );
}

function App() {
  return (
    <Desktop>
      <GlobalStyle />
      <MenuBar>
        <MenuGroup $gap={18}>
          <AppleIcon />
          <MenuItem $bold>Chrome</MenuItem>
          {menus.map((name) => (
            <MenuItem key={name}>{name}</MenuItem>
          ))}
        </MenuGroup>
        <MenuGroup $gap={0}>
          {trayIcons.map(({ w, next, d }, i) => (
            <svg key={i} width={w + next} height="18" viewBox={`0 0 ${w + next} 18`} fill="none" stroke="currentColor" strokeWidth="1.300">
              {d}
            </svg>
          ))}
          <Clock>
            <span>Sun Apr 13</span>
            <span>3:35 PM</span>
          </Clock>
          <svg width="66" height="18" viewBox="2 0 66 18" fill="none" stroke="currentColor" strokeWidth="1.500">
            <circle cx="25" cy="8" r="5" />
            <path d="M28.500 11.500l5 5" strokeWidth="2" />
            <path d="M49 4h2M49 9h2M49 14h2M53 4h14M53 9h11M53 14h14" strokeWidth="2" />
          </svg>
        </MenuGroup>
      </MenuBar>
      <DesktopItem $right={179}>
        <FolderIcon />
        zzzpdfs
      </DesktopItem>
      <DesktopItem $right={93}>
        <FolderIcon />
        wrt
      </DesktopItem>
      <DesktopItem $right={8}>
        <PdfIcon />
        <span>
          W-9_THIGve
          <br />
          r3.pdf
        </span>
      </DesktopItem>
      <Window $top={82} $left={748} $right={-470} $bg="#ebebeb">
        <WindowTitle indent={554}>Hours Report Draft - Inbox for ericj@circadea.com</WindowTitle>
        <MailToolbar stacked />
        <JunkNotice />
      </Window>
      <InboxWindow />
      <MessageWindow />
    </Desktop>
  );
}

export default App;
